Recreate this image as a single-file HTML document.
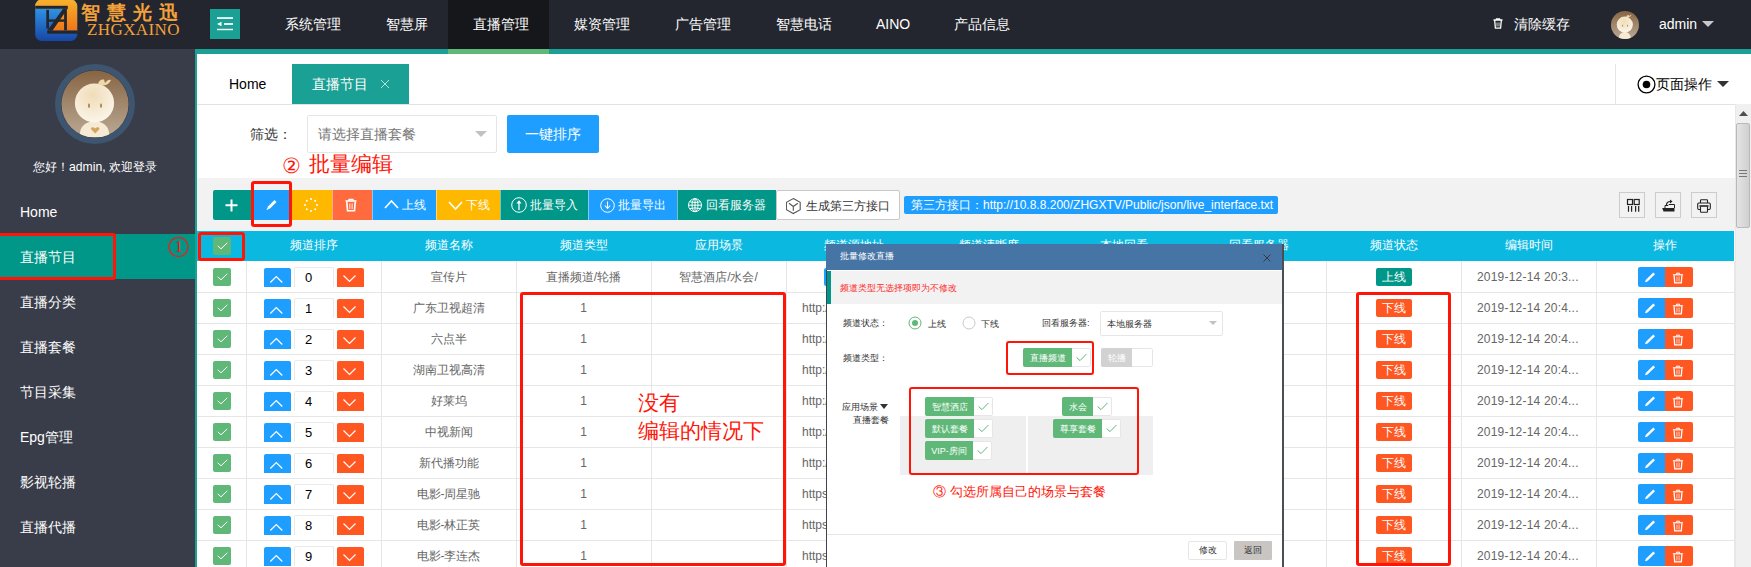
<!DOCTYPE html>
<html><head><meta charset="utf-8">
<style>
*{box-sizing:border-box;margin:0;padding:0}
html,body{width:1751px;height:567px;overflow:hidden;background:#fff;font-family:"Liberation Sans",sans-serif;}
.abs{position:absolute}
.t{position:absolute;white-space:nowrap;line-height:1}
#hdr{position:absolute;left:0;top:0;width:1751px;height:49px;background:#23262E}
#side{position:absolute;left:0;top:49px;width:195px;height:518px;background:#393D49}
.nav{position:absolute;top:0;height:49px;line-height:48px;color:#fff;font-size:14px;white-space:nowrap}
.sm{position:absolute;left:20px;color:#fff;font-size:14px;white-space:nowrap;line-height:1}
.btn{position:absolute;top:190px;height:30px;color:#fff;font-size:12px;white-space:nowrap}
.cb{position:absolute;width:18px;height:18px;background:#5FB878;border-radius:2px}
.cell{position:absolute;font-size:12px;color:#666;white-space:nowrap;line-height:1;text-align:center}
</style></head><body>

<div id="hdr"></div>
<svg class="abs" style="left:35px;top:0px" width="43" height="42" viewBox="0 0 43 42">
<defs><linearGradient id="lg1" gradientUnits="userSpaceOnUse" x1="0" y1="0" x2="0" y2="31"><stop offset="0" stop-color="#f7b02c"/><stop offset="1" stop-color="#ee7418"/></linearGradient>
<linearGradient id="lg2" gradientUnits="userSpaceOnUse" x1="0" y1="9" x2="0" y2="41"><stop offset="0" stop-color="#2e92e4"/><stop offset="1" stop-color="#1746a4"/></linearGradient>
<clipPath id="lgc"><rect x="0.2" y="-0.5" width="42" height="41.5" rx="6.5"/></clipPath></defs>
<g clip-path="url(#lgc)">
<rect x="0" y="-7" width="43" height="49" fill="url(#lg2)"/>
<path d="M0 -7 H43 V30.8 H13 L29 8.7 H0 Z" fill="url(#lg1)"/>
<g fill="#23262E">
<rect x="0" y="5.8" width="32.8" height="3"/>
<path d="M28.2 8.6 H32.8 L17.4 30.8 H12.2 Z"/>
<rect x="12.2" y="30.5" width="31" height="3.2"/>
<rect x="11.3" y="9.9" width="2.7" height="18.7"/>
<rect x="29.1" y="10.3" width="2.8" height="20"/>
<rect x="13.5" y="19.4" width="16" height="2.4"/>
</g></g></svg>
<div class="t" style="left:81px;top:3px;font-family:'Liberation Serif',serif;font-size:19px;color:#f3a13a;letter-spacing:7px;font-weight:bold">智慧光迅</div>
<div class="t" style="left:87px;top:21px;font-family:'Liberation Serif',serif;font-size:17px;color:#f3a13a;letter-spacing:0.4px">ZHGXAINO</div>
<div class="abs" style="left:210px;top:9px;width:30px;height:30px;background:#1AA094"></div>
<svg class="abs" style="left:217px;top:17px" width="17" height="15" viewBox="0 0 17 15"><rect x="0" y="0.2" width="16" height="1.7" fill="#fff"/><rect x="7" y="6.1" width="9" height="1.8" fill="#fff"/><path d="M0 7 L4.5 4.7 V9.3 Z" fill="#fff"/><rect x="0" y="11.8" width="16" height="1.4" fill="#fff"/></svg>
<div class="abs" style="left:448px;top:0;width:101px;height:49px;background:#16171b"></div>
<div class="t" style="left:285px;top:17px;font-size:14px;color:#fff">系统管理</div>
<div class="t" style="left:386px;top:17px;font-size:14px;color:#fff">智慧屏</div>
<div class="t" style="left:473px;top:17px;font-size:14px;color:#fff">直播管理</div>
<div class="t" style="left:574px;top:17px;font-size:14px;color:#fff">媒资管理</div>
<div class="t" style="left:675px;top:17px;font-size:14px;color:#fff">广告管理</div>
<div class="t" style="left:776px;top:17px;font-size:14px;color:#fff">智慧电话</div>
<div class="t" style="left:876px;top:17px;font-size:14px;color:#fff">AINO</div>
<div class="t" style="left:954px;top:17px;font-size:14px;color:#fff">产品信息</div>
<svg class="abs" style="left:1493px;top:18px" width="10" height="11" viewBox="0 0 10 11"><path d="M0.5 2 H9.5 M3.5 2 V0.8 H6.5 V2 M1.7 2.5 L2.4 10.2 H7.6 L8.3 2.5" fill="none" stroke="#fff" stroke-width="1.3"/><path d="M4 4.5V8.5M6 4.5V8.5" stroke="#fff" stroke-width="0.8"/></svg>
<div class="t" style="left:1514px;top:17px;font-size:14px;color:#fff">清除缓存</div>
<svg class="abs" style="left:1611px;top:11px" width="28" height="28" viewBox="6 6 68 68">
<defs><linearGradient id="av1" x1="0" y1="0" x2="0" y2="1"><stop offset="0" stop-color="#876543"/><stop offset="1" stop-color="#bba995"/></linearGradient>
<radialGradient id="hd1" cx="0.45" cy="0.3" r="0.7"><stop offset="0" stop-color="#f0dcb8"/><stop offset="1" stop-color="#fbf5ea"/></radialGradient>
<clipPath id="cc1"><circle cx="40" cy="40" r="34"/></clipPath></defs>
<circle cx="40" cy="40" r="34" fill="url(#av1)"/>
<g clip-path="url(#cc1)"><path d="M24.5 75 Q24.5 58 39.5 57 Q54.5 58 54.5 75 Z" fill="#f6ead5"/></g>
<circle cx="39.5" cy="39" r="19.6" fill="url(#hd1)"/>
<path d="M43 20.5 Q44 15 49 15.5 L50 19 Q53 15 56 16 Q54 21 48 21.5 Z" fill="#efd9a9"/>
<rect x="33" y="39.5" width="2.4" height="4.5" fill="#b78c4c"/><rect x="45" y="39.5" width="2.4" height="4.5" fill="#b78c4c"/>
</svg>
<div class="t" style="left:1659px;top:17px;font-size:14px;color:#fff">admin</div>
<svg class="abs" style="left:1702px;top:21px" width="12" height="7"><path d="M0 0H12L6 6Z" fill="#c8c8cc"/></svg>
<div class="abs" style="left:195px;top:49px;width:1556px;height:5px;background:#1AA094"></div>
<div class="abs" style="left:448px;top:49px;width:101px;height:5px;background:#5FB878"></div>
<div id="side"></div>
<div class="abs" style="left:195px;top:54px;width:2px;height:513px;background:#1AA094"></div>
<svg class="abs" style="left:55px;top:64px" width="80" height="80" viewBox="0 0 80 80">
<defs><linearGradient id="av2" x1="0" y1="0" x2="0" y2="1"><stop offset="0" stop-color="#876543"/><stop offset="1" stop-color="#bba995"/></linearGradient>
<radialGradient id="hd" cx="0.45" cy="0.3" r="0.7"><stop offset="0" stop-color="#f0dcb8"/><stop offset="1" stop-color="#fbf5ea"/></radialGradient>
<clipPath id="cc"><circle cx="40" cy="40" r="33.5"/></clipPath></defs>
<circle cx="40" cy="40" r="36.8" fill="none" stroke="#3e5570" stroke-width="6.4"/>
<circle cx="40" cy="40" r="34" fill="#3a3e48"/>
<circle cx="40" cy="40" r="33.5" fill="url(#av2)"/>
<g clip-path="url(#cc)"><path d="M24.5 73 Q24.5 58 39.5 57 Q54.5 58 54.5 73 Z" fill="#f6ead5"/></g>
<circle cx="39.5" cy="39" r="19.6" fill="url(#hd)"/>
<path d="M43 20.5 Q44 15 49 15.5 L50 19 Q53 15 56 16 Q54 21 48 21.5 Z" fill="#efd9a9"/>
<rect x="33" y="39.5" width="2" height="4.2" rx="1" fill="#b78c4c"/><rect x="45" y="39.5" width="2" height="4.2" rx="1" fill="#b78c4c"/>
<path d="M40.2 69.5 L36.3 65.6 Q35.3 63.3 37.6 63.2 Q39 63.2 40.2 64.6 Q41.4 63.2 42.8 63.2 Q45.1 63.3 44.1 65.6 Z" fill="#d5a55e"/>
</svg>
<div class="t" style="left:33px;top:160.7px;font-size:12.2px;color:#fff">您好！admin, 欢迎登录</div>
<div class="abs" style="left:0;top:234px;width:195px;height:45px;background:#009688"></div>
<div class="sm" style="top:205px">Home</div>
<div class="sm" style="top:250px">直播节目</div>
<div class="sm" style="top:295px">直播分类</div>
<div class="sm" style="top:340px">直播套餐</div>
<div class="sm" style="top:385px">节目采集</div>
<div class="sm" style="top:430px">Epg管理</div>
<div class="sm" style="top:475px">影视轮播</div>
<div class="sm" style="top:520px">直播代播</div>
<div class="abs" style="left:197px;top:104px;width:1538px;height:1px;background:#e2e2e2"></div>
<div class="t" style="left:229px;top:77px;font-size:14px;color:#000">Home</div>
<div class="abs" style="left:292px;top:64px;width:117px;height:40px;background:#1AA094"></div>
<div class="t" style="left:312px;top:77px;font-size:14px;color:#fff">直播节目</div>
<svg class="abs" style="left:380px;top:79px" width="10" height="10"><path d="M1 1L9 9M9 1L1 9" stroke="rgba(255,255,255,0.75)" stroke-width="0.9"/></svg>
<div class="abs" style="left:1615px;top:64px;width:1px;height:40px;background:#e6e6e6"></div>
<svg class="abs" style="left:1637px;top:75px" width="19" height="19"><circle cx="9.5" cy="9.5" r="8.4" fill="none" stroke="#000" stroke-width="1.3"/><circle cx="9.5" cy="9.5" r="3.8" fill="#000"/></svg>
<div class="t" style="left:1656px;top:77px;font-size:14px;color:#000">页面操作</div>
<svg class="abs" style="left:1717px;top:81px" width="12" height="7"><path d="M0 0H12L6 6Z" fill="#333"/></svg>
<div class="t" style="left:250px;top:127px;font-size:14px;color:#333">筛选：</div>
<div class="abs" style="left:307px;top:115px;width:190px;height:38px;border:1px solid #e6e6e6;background:#fff;border-radius:2px"></div>
<div class="t" style="left:318px;top:127px;font-size:14px;color:#757575">请选择直播套餐</div>
<svg class="abs" style="left:475px;top:131px" width="12" height="6"><path d="M0 0H12L6 6Z" fill="#c2c2c2"/></svg>
<div class="abs" style="left:507px;top:115px;width:92px;height:38px;background:#1E9FFF;border-radius:2px"></div>
<div class="t" style="left:525px;top:127px;font-size:14px;color:#fff">一键排序</div>
<div class="abs" style="left:197px;top:178px;width:1538px;height:1px;background:#e6e6e6"></div>
<div class="abs" style="left:197px;top:178px;width:1538px;height:53px;background:#f2f2f2"></div>
<div class="btn" style="left:213px;width:38px;background:#009688;border-radius:2px 0 0 2px"><div class="abs" style="left:0px;top:0"><svg class="abs" style="left:12px;top:9px" width="13" height="13"><path d="M6.5 0.5V12.5M0.5 6.3H12.5" stroke="#fff" stroke-width="2"/></svg></div></div>
<div class="btn" style="left:251px;width:39px;background:#1E9FFF;border-left:1px solid rgba(255,255,255,0.45);"><div class="abs" style="left:-1px;top:0"><svg class="abs" style="left:14px;top:8px" width="13" height="13" viewBox="0 0 13 13"><path d="M2 11.5 L3 8.5 L9.5 2 L11.5 4 L5 10.5 Z" fill="#fff"/><path d="M1.5 12 L2.2 10.2 L3.3 11.3Z" fill="#fff"/></svg></div></div>
<div class="btn" style="left:290px;width:42px;background:#FFB800;border-left:1px solid rgba(255,255,255,0.45);"><div class="abs" style="left:-1px;top:0"><svg class="abs" style="left:13px;top:7px" width="16" height="16" viewBox="0 0 16 16" fill="#fff"><circle cx="8" cy="2" r="1"/><circle cx="12.2" cy="3.8" r="1"/><circle cx="14" cy="8" r="1"/><circle cx="12.2" cy="12.2" r="1"/><circle cx="8" cy="14" r="1"/><circle cx="3.8" cy="12.2" r="1"/><circle cx="2" cy="8" r="1"/><circle cx="3.8" cy="3.8" r="1"/></svg></div></div>
<div class="btn" style="left:332px;width:40px;background:#FF6A3E;border-left:1px solid rgba(255,255,255,0.45);"><div class="abs" style="left:-1px;top:0"><svg class="abs" style="left:12px;top:8px" width="14" height="14" viewBox="0 0 14 14"><path d="M1.5 3 H12.5" stroke="#fff" stroke-width="1.6"/><path d="M5 3 V1.5 H9 V3" fill="none" stroke="#fff" stroke-width="1.3"/><path d="M2.8 4 L3.5 12.8 H10.5 L11.2 4" fill="none" stroke="#fff" stroke-width="1.6"/><path d="M5.5 5.5V11M7 5.5V11M8.5 5.5V11" stroke="#fff" stroke-width="0.6"/></svg></div></div>
<div class="btn" style="left:372px;width:64px;background:#1E9FFF;border-left:1px solid rgba(255,255,255,0.45);"><div class="abs" style="left:-1px;top:0"><svg class="abs" style="left:12px;top:9px" width="15" height="10"><path d="M1 9 L7.5 2 L14 9" fill="none" stroke="#fff" stroke-width="1.6"/></svg><div class="t" style="left:30px;top:9px">上线</div></div></div>
<div class="btn" style="left:436px;width:64px;background:#FFB800;border-left:1px solid rgba(255,255,255,0.45);"><div class="abs" style="left:-1px;top:0"><svg class="abs" style="left:12px;top:11px" width="15" height="10"><path d="M1 1 L7.5 8 L14 1" fill="none" stroke="#fff" stroke-width="1.6"/></svg><div class="t" style="left:30px;top:9px">下线</div></div></div>
<div class="btn" style="left:500px;width:88px;background:#009688;border-left:1px solid rgba(255,255,255,0.45);"><div class="abs" style="left:-1px;top:0"><svg class="abs" style="left:11px;top:7px" width="16" height="16" viewBox="0 0 16 16"><circle cx="8" cy="8" r="7.3" fill="none" stroke="#fff" stroke-width="1"/><path d="M8 13V4.5" stroke="#fff" stroke-width="1.3"/><path d="M5.5 6.5 L8 3.3 L10.5 6.5Z" fill="#fff"/></svg><div class="t" style="left:30px;top:9px">批量导入</div></div></div>
<div class="btn" style="left:588px;width:89px;background:#1E9FFF;border-left:1px solid rgba(255,255,255,0.45);"><div class="abs" style="left:-1px;top:0"><svg class="abs" style="left:12px;top:8px" width="15" height="15" viewBox="0 0 15 15"><circle cx="7.5" cy="7.5" r="6.8" fill="none" stroke="#fff" stroke-width="1"/><path d="M7.5 3.5V10" stroke="#fff" stroke-width="1.1"/><path d="M4.8 7.5 L7.5 10.5 L10.2 7.5" fill="none" stroke="#fff" stroke-width="1.1"/></svg><div class="t" style="left:30px;top:9px">批量导出</div></div></div>
<div class="btn" style="left:677px;width:99px;background:#009688;border-left:1px solid rgba(255,255,255,0.45);"><div class="abs" style="left:-1px;top:0"><svg class="abs" style="left:11px;top:8px" width="15" height="15" viewBox="0 0 15 15" fill="none" stroke="#fff" stroke-width="1"><circle cx="7" cy="7.2" r="6.5"/><ellipse cx="7" cy="7.2" rx="3" ry="6.5"/><path d="M7 0.7V13.7M0.5 7.2H13.5M1.5 3.8Q7 5.2 12.5 3.8M1.5 10.6Q7 9.2 12.5 10.6"/></svg><div class="t" style="left:29px;top:9px">回看服务器</div></div></div>
<div class="btn" style="left:776px;width:124px;background:#fff;border:1px solid #C9C9C9;border-radius:2px;color:#333"><div class="abs" style="left:0px;top:0"><svg class="abs" style="left:9px;top:6px" width="16" height="18" viewBox="0 0 16 18" fill="none" stroke="#555" stroke-width="1.1"><path d="M7.3 1.6 L14.2 5.3 V12.7 L7.3 16.5 L0.4 12.7 V5.3 Z"/><path d="M3 6.2 L7.3 9.5 L11.8 6.2 M7.3 9.5 V13.8"/></svg><div class="t" style="left:29px;top:9px;color:#333">生成第三方接口</div></div></div>
<div class="abs" style="left:904px;top:196px;width:374px;height:18px;background:#1E9FFF;border-radius:2px"></div>
<div class="t" style="left:911px;top:199px;font-size:12px;color:#fff">第三方接口：http://10.8.8.200/ZHGXTV/Public/json/live_interface.txt</div>
<div class="abs" style="left:1619px;top:192px;width:26px;height:26px;border:1px solid #ccc"></div>
<div class="abs" style="left:1655px;top:192px;width:26px;height:26px;border:1px solid #ccc"></div>
<div class="abs" style="left:1691px;top:192px;width:26px;height:26px;border:1px solid #ccc"></div>
<svg class="abs" style="left:1626px;top:198px" width="15" height="15" viewBox="0 0 15 15"><rect x="1.5" y="1.5" width="5" height="5" fill="none" stroke="#222" stroke-width="1.2"/><rect x="8.2" y="1.5" width="5" height="5" fill="none" stroke="#222" stroke-width="1.2"/><path d="M2.5 8V13.8M5.6 8V13.8M9.6 8V13.8M12.7 8V13.8" stroke="#222" stroke-width="1.2"/></svg>
<svg class="abs" style="left:1662px;top:199px" width="13" height="13" viewBox="0 0 13 13"><path d="M0.2 9 H12.5 V12.5 H1.5 Z" fill="#222"/><path d="M3 9 V6.5 H6 L7 5.5 H12.5 V9" fill="none" stroke="#222" stroke-width="1"/><path d="M4.5 6 Q4.5 2.5 8.5 2.5" fill="none" stroke="#222" stroke-width="1.2"/><path d="M8 0.5 L10.5 2.5 L8 4.5Z" fill="#222"/></svg>
<svg class="abs" style="left:1697px;top:199px" width="14" height="14" viewBox="0 0 14 14" fill="none" stroke="#222" stroke-width="1.1"><path d="M3.5 4 V1.5 Q3.5 0.8 4.2 0.8 H9.8 Q10.5 0.8 10.5 1.5 V4"/><path d="M3 10.5 H1.8 Q0.7 10.5 0.7 9.3 V5.2 Q0.7 4 1.8 4 H12.2 Q13.3 4 13.3 5.2 V9.3 Q13.3 10.5 12.2 10.5 H11"/><path d="M3.5 7.5 V12.5 Q3.5 13.2 4.2 13.2 H9.8 Q10.5 13.2 10.5 12.5 V7.5"/><path d="M2.5 7 H11.5" stroke-width="1.6"/></svg>
<div class="abs" style="left:197px;top:231px;width:1537px;height:30px;background:#0bb8e0"></div>
<div class="t" style="left:246px;width:135px;top:239px;font-size:12px;color:#fff;text-align:center">频道排序</div>
<div class="t" style="left:381px;width:135px;top:239px;font-size:12px;color:#fff;text-align:center">频道名称</div>
<div class="t" style="left:516px;width:135px;top:239px;font-size:12px;color:#fff;text-align:center">频道类型</div>
<div class="t" style="left:651px;width:135px;top:239px;font-size:12px;color:#fff;text-align:center">应用场景</div>
<div class="t" style="left:786px;width:135px;top:239px;font-size:12px;color:#fff;text-align:center">频道源地址</div>
<div class="t" style="left:921px;width:135px;top:239px;font-size:12px;color:#fff;text-align:center">频道清晰度</div>
<div class="t" style="left:1056px;width:135px;top:239px;font-size:12px;color:#fff;text-align:center">本地回看</div>
<div class="t" style="left:1191px;width:135px;top:239px;font-size:12px;color:#fff;text-align:center">回看服务器</div>
<div class="t" style="left:1326px;width:135px;top:239px;font-size:12px;color:#fff;text-align:center">频道状态</div>
<div class="t" style="left:1461px;width:135px;top:239px;font-size:12px;color:#fff;text-align:center">编辑时间</div>
<div class="t" style="left:1596px;width:138px;top:239px;font-size:12px;color:#fff;text-align:center">操作</div>
<div class="cb" style="left:213px;top:237px"><svg class="abs" style="left:4px;top:5px" width="11" height="8"><path d="M0.7 3.8 L4 6.8 L10.3 0.8" fill="none" stroke="#fff" stroke-width="1"/></svg></div>
<div class="abs" style="left:197px;top:261px;width:1537px;height:306px;background:#fff"></div>
<div class="abs" style="left:246px;top:261px;width:1px;height:306px;background:#e6e6e6"></div>
<div class="abs" style="left:381px;top:261px;width:1px;height:306px;background:#e6e6e6"></div>
<div class="abs" style="left:516px;top:261px;width:1px;height:306px;background:#e6e6e6"></div>
<div class="abs" style="left:651px;top:261px;width:1px;height:306px;background:#e6e6e6"></div>
<div class="abs" style="left:786px;top:261px;width:1px;height:306px;background:#e6e6e6"></div>
<div class="abs" style="left:921px;top:261px;width:1px;height:306px;background:#e6e6e6"></div>
<div class="abs" style="left:1056px;top:261px;width:1px;height:306px;background:#e6e6e6"></div>
<div class="abs" style="left:1191px;top:261px;width:1px;height:306px;background:#e6e6e6"></div>
<div class="abs" style="left:1326px;top:261px;width:1px;height:306px;background:#e6e6e6"></div>
<div class="abs" style="left:1461px;top:261px;width:1px;height:306px;background:#e6e6e6"></div>
<div class="abs" style="left:1596px;top:261px;width:1px;height:306px;background:#e6e6e6"></div>
<div class="abs" style="left:1734px;top:261px;width:1px;height:306px;background:#e6e6e6"></div>
<div class="abs" style="left:197px;top:292px;width:1537px;height:1px;background:#e6e6e6"></div>
<div class="cb" style="left:213px;top:268px"><svg class="abs" style="left:4px;top:5px" width="11" height="8"><path d="M0.7 3.8 L4 6.8 L10.3 0.8" fill="none" stroke="#fff" stroke-width="1"/></svg></div>
<div class="abs" style="left:264px;top:268px;width:27px;height:19px;background:#1E9FFF;border-radius:2px 2px 0 0"><svg class="abs" style="left:5px;top:7px" width="15" height="9"><path d="M1.3 7.5 L7.3 1.5 L13.3 7.5" fill="none" stroke="#fff" stroke-width="1.2"/></svg></div>
<div class="abs" style="left:294px;top:267px;width:40px;height:20px;background:#fff;border:1px solid #eaeaea;border-bottom:none;border-radius:2px 2px 0 0"></div>
<div class="t" style="left:305px;top:271px;font-size:13px;color:#000">0</div>
<div class="abs" style="left:337px;top:268px;width:27px;height:19px;background:#FF5722;border-radius:2px 2px 0 0"><svg class="abs" style="left:5px;top:6px" width="15" height="9"><path d="M1.5 1.5 L7.5 7.5 L13.5 1.5" fill="none" stroke="#fff" stroke-width="1.2"/></svg></div>
<div class="cell" style="left:381px;width:135px;top:271px">宣传片</div>
<div class="cell" style="left:516px;width:135px;top:271px">直播频道/轮播</div>
<div class="cell" style="left:651px;width:135px;top:271px">智慧酒店/水会/</div>
<div class="abs" style="left:824px;top:268px;width:20px;height:18px;background:#1E9FFF;border-radius:2px"></div>
<div class="abs" style="left:1376px;top:268px;width:36px;height:18px;background:#009688;border-radius:2px"></div><div class="t" style="left:1382px;top:271px;font-size:12px;color:#fff">上线</div>
<div class="t" style="left:1477px;top:271px;font-size:12px;color:#666;letter-spacing:0.2px">2019-12-14 20:3...</div>
<div class="abs" style="left:1638px;top:267px;width:27px;height:20px;background:#1E9FFF;border-radius:2px 0 0 2px"><svg class="abs" style="left:6px;top:5px" width="12" height="11" viewBox="0 0 12 11"><path d="M1 10.2 L1.9 7.8 L9.3 0.6 L11 2.3 L3.5 9.6Z" fill="#fff"/></svg></div>
<div class="abs" style="left:1665px;top:267px;width:28px;height:20px;background:#FF5722;border-radius:0 2px 2px 0"><svg class="abs" style="left:7px;top:5px" width="12" height="12" viewBox="0 0 12 12"><path d="M4.4 2.3 V1.2 H7.6 V2.3" fill="none" stroke="#fff" stroke-width="1"/><path d="M0.9 2.8 H11.1" stroke="#fff" stroke-width="1.2"/><path d="M2.1 3.4 L2.7 10.8 H9.3 L9.9 3.4" fill="none" stroke="#fff" stroke-width="1.3"/><path d="M4.7 4.6V9.6M6 4.6V9.6M7.3 4.6V9.6" stroke="#fff" stroke-width="0.5"/></svg></div>
<div class="abs" style="left:197px;top:323px;width:1537px;height:1px;background:#e6e6e6"></div>
<div class="cb" style="left:213px;top:299px"><svg class="abs" style="left:4px;top:5px" width="11" height="8"><path d="M0.7 3.8 L4 6.8 L10.3 0.8" fill="none" stroke="#fff" stroke-width="1"/></svg></div>
<div class="abs" style="left:264px;top:299px;width:27px;height:19px;background:#1E9FFF;border-radius:2px 2px 0 0"><svg class="abs" style="left:5px;top:7px" width="15" height="9"><path d="M1.3 7.5 L7.3 1.5 L13.3 7.5" fill="none" stroke="#fff" stroke-width="1.2"/></svg></div>
<div class="abs" style="left:294px;top:298px;width:40px;height:20px;background:#fff;border:1px solid #eaeaea;border-bottom:none;border-radius:2px 2px 0 0"></div>
<div class="t" style="left:305px;top:302px;font-size:13px;color:#000">1</div>
<div class="abs" style="left:337px;top:299px;width:27px;height:19px;background:#FF5722;border-radius:2px 2px 0 0"><svg class="abs" style="left:5px;top:6px" width="15" height="9"><path d="M1.5 1.5 L7.5 7.5 L13.5 1.5" fill="none" stroke="#fff" stroke-width="1.2"/></svg></div>
<div class="cell" style="left:381px;width:135px;top:302px">广东卫视超清</div>
<div class="cell" style="left:516px;width:135px;top:302px">1</div>
<div class="t" style="left:802px;top:302px;font-size:12px;color:#666">http://10.8.8.200</div>
<div class="abs" style="left:1376px;top:299px;width:36px;height:18px;background:#FF5722;border-radius:2px"></div><div class="t" style="left:1382px;top:302px;font-size:12px;color:#fff">下线</div>
<div class="t" style="left:1477px;top:302px;font-size:12px;color:#666;letter-spacing:0.2px">2019-12-14 20:4...</div>
<div class="abs" style="left:1638px;top:298px;width:27px;height:20px;background:#1E9FFF;border-radius:2px 0 0 2px"><svg class="abs" style="left:6px;top:5px" width="12" height="11" viewBox="0 0 12 11"><path d="M1 10.2 L1.9 7.8 L9.3 0.6 L11 2.3 L3.5 9.6Z" fill="#fff"/></svg></div>
<div class="abs" style="left:1665px;top:298px;width:28px;height:20px;background:#FF5722;border-radius:0 2px 2px 0"><svg class="abs" style="left:7px;top:5px" width="12" height="12" viewBox="0 0 12 12"><path d="M4.4 2.3 V1.2 H7.6 V2.3" fill="none" stroke="#fff" stroke-width="1"/><path d="M0.9 2.8 H11.1" stroke="#fff" stroke-width="1.2"/><path d="M2.1 3.4 L2.7 10.8 H9.3 L9.9 3.4" fill="none" stroke="#fff" stroke-width="1.3"/><path d="M4.7 4.6V9.6M6 4.6V9.6M7.3 4.6V9.6" stroke="#fff" stroke-width="0.5"/></svg></div>
<div class="abs" style="left:197px;top:354px;width:1537px;height:1px;background:#e6e6e6"></div>
<div class="cb" style="left:213px;top:330px"><svg class="abs" style="left:4px;top:5px" width="11" height="8"><path d="M0.7 3.8 L4 6.8 L10.3 0.8" fill="none" stroke="#fff" stroke-width="1"/></svg></div>
<div class="abs" style="left:264px;top:330px;width:27px;height:19px;background:#1E9FFF;border-radius:2px 2px 0 0"><svg class="abs" style="left:5px;top:7px" width="15" height="9"><path d="M1.3 7.5 L7.3 1.5 L13.3 7.5" fill="none" stroke="#fff" stroke-width="1.2"/></svg></div>
<div class="abs" style="left:294px;top:329px;width:40px;height:20px;background:#fff;border:1px solid #eaeaea;border-bottom:none;border-radius:2px 2px 0 0"></div>
<div class="t" style="left:305px;top:333px;font-size:13px;color:#000">2</div>
<div class="abs" style="left:337px;top:330px;width:27px;height:19px;background:#FF5722;border-radius:2px 2px 0 0"><svg class="abs" style="left:5px;top:6px" width="15" height="9"><path d="M1.5 1.5 L7.5 7.5 L13.5 1.5" fill="none" stroke="#fff" stroke-width="1.2"/></svg></div>
<div class="cell" style="left:381px;width:135px;top:333px">六点半</div>
<div class="cell" style="left:516px;width:135px;top:333px">1</div>
<div class="t" style="left:802px;top:333px;font-size:12px;color:#666">http://10.8.8.200</div>
<div class="abs" style="left:1376px;top:330px;width:36px;height:18px;background:#FF5722;border-radius:2px"></div><div class="t" style="left:1382px;top:333px;font-size:12px;color:#fff">下线</div>
<div class="t" style="left:1477px;top:333px;font-size:12px;color:#666;letter-spacing:0.2px">2019-12-14 20:4...</div>
<div class="abs" style="left:1638px;top:329px;width:27px;height:20px;background:#1E9FFF;border-radius:2px 0 0 2px"><svg class="abs" style="left:6px;top:5px" width="12" height="11" viewBox="0 0 12 11"><path d="M1 10.2 L1.9 7.8 L9.3 0.6 L11 2.3 L3.5 9.6Z" fill="#fff"/></svg></div>
<div class="abs" style="left:1665px;top:329px;width:28px;height:20px;background:#FF5722;border-radius:0 2px 2px 0"><svg class="abs" style="left:7px;top:5px" width="12" height="12" viewBox="0 0 12 12"><path d="M4.4 2.3 V1.2 H7.6 V2.3" fill="none" stroke="#fff" stroke-width="1"/><path d="M0.9 2.8 H11.1" stroke="#fff" stroke-width="1.2"/><path d="M2.1 3.4 L2.7 10.8 H9.3 L9.9 3.4" fill="none" stroke="#fff" stroke-width="1.3"/><path d="M4.7 4.6V9.6M6 4.6V9.6M7.3 4.6V9.6" stroke="#fff" stroke-width="0.5"/></svg></div>
<div class="abs" style="left:197px;top:385px;width:1537px;height:1px;background:#e6e6e6"></div>
<div class="cb" style="left:213px;top:361px"><svg class="abs" style="left:4px;top:5px" width="11" height="8"><path d="M0.7 3.8 L4 6.8 L10.3 0.8" fill="none" stroke="#fff" stroke-width="1"/></svg></div>
<div class="abs" style="left:264px;top:361px;width:27px;height:19px;background:#1E9FFF;border-radius:2px 2px 0 0"><svg class="abs" style="left:5px;top:7px" width="15" height="9"><path d="M1.3 7.5 L7.3 1.5 L13.3 7.5" fill="none" stroke="#fff" stroke-width="1.2"/></svg></div>
<div class="abs" style="left:294px;top:360px;width:40px;height:20px;background:#fff;border:1px solid #eaeaea;border-bottom:none;border-radius:2px 2px 0 0"></div>
<div class="t" style="left:305px;top:364px;font-size:13px;color:#000">3</div>
<div class="abs" style="left:337px;top:361px;width:27px;height:19px;background:#FF5722;border-radius:2px 2px 0 0"><svg class="abs" style="left:5px;top:6px" width="15" height="9"><path d="M1.5 1.5 L7.5 7.5 L13.5 1.5" fill="none" stroke="#fff" stroke-width="1.2"/></svg></div>
<div class="cell" style="left:381px;width:135px;top:364px">湖南卫视高清</div>
<div class="cell" style="left:516px;width:135px;top:364px">1</div>
<div class="t" style="left:802px;top:364px;font-size:12px;color:#666">http://10.8.8.200</div>
<div class="abs" style="left:1376px;top:361px;width:36px;height:18px;background:#FF5722;border-radius:2px"></div><div class="t" style="left:1382px;top:364px;font-size:12px;color:#fff">下线</div>
<div class="t" style="left:1477px;top:364px;font-size:12px;color:#666;letter-spacing:0.2px">2019-12-14 20:4...</div>
<div class="abs" style="left:1638px;top:360px;width:27px;height:20px;background:#1E9FFF;border-radius:2px 0 0 2px"><svg class="abs" style="left:6px;top:5px" width="12" height="11" viewBox="0 0 12 11"><path d="M1 10.2 L1.9 7.8 L9.3 0.6 L11 2.3 L3.5 9.6Z" fill="#fff"/></svg></div>
<div class="abs" style="left:1665px;top:360px;width:28px;height:20px;background:#FF5722;border-radius:0 2px 2px 0"><svg class="abs" style="left:7px;top:5px" width="12" height="12" viewBox="0 0 12 12"><path d="M4.4 2.3 V1.2 H7.6 V2.3" fill="none" stroke="#fff" stroke-width="1"/><path d="M0.9 2.8 H11.1" stroke="#fff" stroke-width="1.2"/><path d="M2.1 3.4 L2.7 10.8 H9.3 L9.9 3.4" fill="none" stroke="#fff" stroke-width="1.3"/><path d="M4.7 4.6V9.6M6 4.6V9.6M7.3 4.6V9.6" stroke="#fff" stroke-width="0.5"/></svg></div>
<div class="abs" style="left:197px;top:416px;width:1537px;height:1px;background:#e6e6e6"></div>
<div class="cb" style="left:213px;top:392px"><svg class="abs" style="left:4px;top:5px" width="11" height="8"><path d="M0.7 3.8 L4 6.8 L10.3 0.8" fill="none" stroke="#fff" stroke-width="1"/></svg></div>
<div class="abs" style="left:264px;top:392px;width:27px;height:19px;background:#1E9FFF;border-radius:2px 2px 0 0"><svg class="abs" style="left:5px;top:7px" width="15" height="9"><path d="M1.3 7.5 L7.3 1.5 L13.3 7.5" fill="none" stroke="#fff" stroke-width="1.2"/></svg></div>
<div class="abs" style="left:294px;top:391px;width:40px;height:20px;background:#fff;border:1px solid #eaeaea;border-bottom:none;border-radius:2px 2px 0 0"></div>
<div class="t" style="left:305px;top:395px;font-size:13px;color:#000">4</div>
<div class="abs" style="left:337px;top:392px;width:27px;height:19px;background:#FF5722;border-radius:2px 2px 0 0"><svg class="abs" style="left:5px;top:6px" width="15" height="9"><path d="M1.5 1.5 L7.5 7.5 L13.5 1.5" fill="none" stroke="#fff" stroke-width="1.2"/></svg></div>
<div class="cell" style="left:381px;width:135px;top:395px">好莱坞</div>
<div class="cell" style="left:516px;width:135px;top:395px">1</div>
<div class="t" style="left:802px;top:395px;font-size:12px;color:#666">http://10.8.8.200</div>
<div class="abs" style="left:1376px;top:392px;width:36px;height:18px;background:#FF5722;border-radius:2px"></div><div class="t" style="left:1382px;top:395px;font-size:12px;color:#fff">下线</div>
<div class="t" style="left:1477px;top:395px;font-size:12px;color:#666;letter-spacing:0.2px">2019-12-14 20:4...</div>
<div class="abs" style="left:1638px;top:391px;width:27px;height:20px;background:#1E9FFF;border-radius:2px 0 0 2px"><svg class="abs" style="left:6px;top:5px" width="12" height="11" viewBox="0 0 12 11"><path d="M1 10.2 L1.9 7.8 L9.3 0.6 L11 2.3 L3.5 9.6Z" fill="#fff"/></svg></div>
<div class="abs" style="left:1665px;top:391px;width:28px;height:20px;background:#FF5722;border-radius:0 2px 2px 0"><svg class="abs" style="left:7px;top:5px" width="12" height="12" viewBox="0 0 12 12"><path d="M4.4 2.3 V1.2 H7.6 V2.3" fill="none" stroke="#fff" stroke-width="1"/><path d="M0.9 2.8 H11.1" stroke="#fff" stroke-width="1.2"/><path d="M2.1 3.4 L2.7 10.8 H9.3 L9.9 3.4" fill="none" stroke="#fff" stroke-width="1.3"/><path d="M4.7 4.6V9.6M6 4.6V9.6M7.3 4.6V9.6" stroke="#fff" stroke-width="0.5"/></svg></div>
<div class="abs" style="left:197px;top:447px;width:1537px;height:1px;background:#e6e6e6"></div>
<div class="cb" style="left:213px;top:423px"><svg class="abs" style="left:4px;top:5px" width="11" height="8"><path d="M0.7 3.8 L4 6.8 L10.3 0.8" fill="none" stroke="#fff" stroke-width="1"/></svg></div>
<div class="abs" style="left:264px;top:423px;width:27px;height:19px;background:#1E9FFF;border-radius:2px 2px 0 0"><svg class="abs" style="left:5px;top:7px" width="15" height="9"><path d="M1.3 7.5 L7.3 1.5 L13.3 7.5" fill="none" stroke="#fff" stroke-width="1.2"/></svg></div>
<div class="abs" style="left:294px;top:422px;width:40px;height:20px;background:#fff;border:1px solid #eaeaea;border-bottom:none;border-radius:2px 2px 0 0"></div>
<div class="t" style="left:305px;top:426px;font-size:13px;color:#000">5</div>
<div class="abs" style="left:337px;top:423px;width:27px;height:19px;background:#FF5722;border-radius:2px 2px 0 0"><svg class="abs" style="left:5px;top:6px" width="15" height="9"><path d="M1.5 1.5 L7.5 7.5 L13.5 1.5" fill="none" stroke="#fff" stroke-width="1.2"/></svg></div>
<div class="cell" style="left:381px;width:135px;top:426px">中视新闻</div>
<div class="cell" style="left:516px;width:135px;top:426px">1</div>
<div class="t" style="left:802px;top:426px;font-size:12px;color:#666">http://10.8.8.200</div>
<div class="abs" style="left:1376px;top:423px;width:36px;height:18px;background:#FF5722;border-radius:2px"></div><div class="t" style="left:1382px;top:426px;font-size:12px;color:#fff">下线</div>
<div class="t" style="left:1477px;top:426px;font-size:12px;color:#666;letter-spacing:0.2px">2019-12-14 20:4...</div>
<div class="abs" style="left:1638px;top:422px;width:27px;height:20px;background:#1E9FFF;border-radius:2px 0 0 2px"><svg class="abs" style="left:6px;top:5px" width="12" height="11" viewBox="0 0 12 11"><path d="M1 10.2 L1.9 7.8 L9.3 0.6 L11 2.3 L3.5 9.6Z" fill="#fff"/></svg></div>
<div class="abs" style="left:1665px;top:422px;width:28px;height:20px;background:#FF5722;border-radius:0 2px 2px 0"><svg class="abs" style="left:7px;top:5px" width="12" height="12" viewBox="0 0 12 12"><path d="M4.4 2.3 V1.2 H7.6 V2.3" fill="none" stroke="#fff" stroke-width="1"/><path d="M0.9 2.8 H11.1" stroke="#fff" stroke-width="1.2"/><path d="M2.1 3.4 L2.7 10.8 H9.3 L9.9 3.4" fill="none" stroke="#fff" stroke-width="1.3"/><path d="M4.7 4.6V9.6M6 4.6V9.6M7.3 4.6V9.6" stroke="#fff" stroke-width="0.5"/></svg></div>
<div class="abs" style="left:197px;top:478px;width:1537px;height:1px;background:#e6e6e6"></div>
<div class="cb" style="left:213px;top:454px"><svg class="abs" style="left:4px;top:5px" width="11" height="8"><path d="M0.7 3.8 L4 6.8 L10.3 0.8" fill="none" stroke="#fff" stroke-width="1"/></svg></div>
<div class="abs" style="left:264px;top:454px;width:27px;height:19px;background:#1E9FFF;border-radius:2px 2px 0 0"><svg class="abs" style="left:5px;top:7px" width="15" height="9"><path d="M1.3 7.5 L7.3 1.5 L13.3 7.5" fill="none" stroke="#fff" stroke-width="1.2"/></svg></div>
<div class="abs" style="left:294px;top:453px;width:40px;height:20px;background:#fff;border:1px solid #eaeaea;border-bottom:none;border-radius:2px 2px 0 0"></div>
<div class="t" style="left:305px;top:457px;font-size:13px;color:#000">6</div>
<div class="abs" style="left:337px;top:454px;width:27px;height:19px;background:#FF5722;border-radius:2px 2px 0 0"><svg class="abs" style="left:5px;top:6px" width="15" height="9"><path d="M1.5 1.5 L7.5 7.5 L13.5 1.5" fill="none" stroke="#fff" stroke-width="1.2"/></svg></div>
<div class="cell" style="left:381px;width:135px;top:457px">新代播功能</div>
<div class="cell" style="left:516px;width:135px;top:457px">1</div>
<div class="t" style="left:802px;top:457px;font-size:12px;color:#666">http://10.8.8.200</div>
<div class="abs" style="left:1376px;top:454px;width:36px;height:18px;background:#FF5722;border-radius:2px"></div><div class="t" style="left:1382px;top:457px;font-size:12px;color:#fff">下线</div>
<div class="t" style="left:1477px;top:457px;font-size:12px;color:#666;letter-spacing:0.2px">2019-12-14 20:4...</div>
<div class="abs" style="left:1638px;top:453px;width:27px;height:20px;background:#1E9FFF;border-radius:2px 0 0 2px"><svg class="abs" style="left:6px;top:5px" width="12" height="11" viewBox="0 0 12 11"><path d="M1 10.2 L1.9 7.8 L9.3 0.6 L11 2.3 L3.5 9.6Z" fill="#fff"/></svg></div>
<div class="abs" style="left:1665px;top:453px;width:28px;height:20px;background:#FF5722;border-radius:0 2px 2px 0"><svg class="abs" style="left:7px;top:5px" width="12" height="12" viewBox="0 0 12 12"><path d="M4.4 2.3 V1.2 H7.6 V2.3" fill="none" stroke="#fff" stroke-width="1"/><path d="M0.9 2.8 H11.1" stroke="#fff" stroke-width="1.2"/><path d="M2.1 3.4 L2.7 10.8 H9.3 L9.9 3.4" fill="none" stroke="#fff" stroke-width="1.3"/><path d="M4.7 4.6V9.6M6 4.6V9.6M7.3 4.6V9.6" stroke="#fff" stroke-width="0.5"/></svg></div>
<div class="abs" style="left:197px;top:509px;width:1537px;height:1px;background:#e6e6e6"></div>
<div class="cb" style="left:213px;top:485px"><svg class="abs" style="left:4px;top:5px" width="11" height="8"><path d="M0.7 3.8 L4 6.8 L10.3 0.8" fill="none" stroke="#fff" stroke-width="1"/></svg></div>
<div class="abs" style="left:264px;top:485px;width:27px;height:19px;background:#1E9FFF;border-radius:2px 2px 0 0"><svg class="abs" style="left:5px;top:7px" width="15" height="9"><path d="M1.3 7.5 L7.3 1.5 L13.3 7.5" fill="none" stroke="#fff" stroke-width="1.2"/></svg></div>
<div class="abs" style="left:294px;top:484px;width:40px;height:20px;background:#fff;border:1px solid #eaeaea;border-bottom:none;border-radius:2px 2px 0 0"></div>
<div class="t" style="left:305px;top:488px;font-size:13px;color:#000">7</div>
<div class="abs" style="left:337px;top:485px;width:27px;height:19px;background:#FF5722;border-radius:2px 2px 0 0"><svg class="abs" style="left:5px;top:6px" width="15" height="9"><path d="M1.5 1.5 L7.5 7.5 L13.5 1.5" fill="none" stroke="#fff" stroke-width="1.2"/></svg></div>
<div class="cell" style="left:381px;width:135px;top:488px">电影-周星驰</div>
<div class="cell" style="left:516px;width:135px;top:488px">1</div>
<div class="t" style="left:802px;top:488px;font-size:12px;color:#666">https://10.8.8.200</div>
<div class="abs" style="left:1376px;top:485px;width:36px;height:18px;background:#FF5722;border-radius:2px"></div><div class="t" style="left:1382px;top:488px;font-size:12px;color:#fff">下线</div>
<div class="t" style="left:1477px;top:488px;font-size:12px;color:#666;letter-spacing:0.2px">2019-12-14 20:4...</div>
<div class="abs" style="left:1638px;top:484px;width:27px;height:20px;background:#1E9FFF;border-radius:2px 0 0 2px"><svg class="abs" style="left:6px;top:5px" width="12" height="11" viewBox="0 0 12 11"><path d="M1 10.2 L1.9 7.8 L9.3 0.6 L11 2.3 L3.5 9.6Z" fill="#fff"/></svg></div>
<div class="abs" style="left:1665px;top:484px;width:28px;height:20px;background:#FF5722;border-radius:0 2px 2px 0"><svg class="abs" style="left:7px;top:5px" width="12" height="12" viewBox="0 0 12 12"><path d="M4.4 2.3 V1.2 H7.6 V2.3" fill="none" stroke="#fff" stroke-width="1"/><path d="M0.9 2.8 H11.1" stroke="#fff" stroke-width="1.2"/><path d="M2.1 3.4 L2.7 10.8 H9.3 L9.9 3.4" fill="none" stroke="#fff" stroke-width="1.3"/><path d="M4.7 4.6V9.6M6 4.6V9.6M7.3 4.6V9.6" stroke="#fff" stroke-width="0.5"/></svg></div>
<div class="abs" style="left:197px;top:540px;width:1537px;height:1px;background:#e6e6e6"></div>
<div class="cb" style="left:213px;top:516px"><svg class="abs" style="left:4px;top:5px" width="11" height="8"><path d="M0.7 3.8 L4 6.8 L10.3 0.8" fill="none" stroke="#fff" stroke-width="1"/></svg></div>
<div class="abs" style="left:264px;top:516px;width:27px;height:19px;background:#1E9FFF;border-radius:2px 2px 0 0"><svg class="abs" style="left:5px;top:7px" width="15" height="9"><path d="M1.3 7.5 L7.3 1.5 L13.3 7.5" fill="none" stroke="#fff" stroke-width="1.2"/></svg></div>
<div class="abs" style="left:294px;top:515px;width:40px;height:20px;background:#fff;border:1px solid #eaeaea;border-bottom:none;border-radius:2px 2px 0 0"></div>
<div class="t" style="left:305px;top:519px;font-size:13px;color:#000">8</div>
<div class="abs" style="left:337px;top:516px;width:27px;height:19px;background:#FF5722;border-radius:2px 2px 0 0"><svg class="abs" style="left:5px;top:6px" width="15" height="9"><path d="M1.5 1.5 L7.5 7.5 L13.5 1.5" fill="none" stroke="#fff" stroke-width="1.2"/></svg></div>
<div class="cell" style="left:381px;width:135px;top:519px">电影-林正英</div>
<div class="cell" style="left:516px;width:135px;top:519px">1</div>
<div class="t" style="left:802px;top:519px;font-size:12px;color:#666">https://10.8.8.200</div>
<div class="abs" style="left:1376px;top:516px;width:36px;height:18px;background:#FF5722;border-radius:2px"></div><div class="t" style="left:1382px;top:519px;font-size:12px;color:#fff">下线</div>
<div class="t" style="left:1477px;top:519px;font-size:12px;color:#666;letter-spacing:0.2px">2019-12-14 20:4...</div>
<div class="abs" style="left:1638px;top:515px;width:27px;height:20px;background:#1E9FFF;border-radius:2px 0 0 2px"><svg class="abs" style="left:6px;top:5px" width="12" height="11" viewBox="0 0 12 11"><path d="M1 10.2 L1.9 7.8 L9.3 0.6 L11 2.3 L3.5 9.6Z" fill="#fff"/></svg></div>
<div class="abs" style="left:1665px;top:515px;width:28px;height:20px;background:#FF5722;border-radius:0 2px 2px 0"><svg class="abs" style="left:7px;top:5px" width="12" height="12" viewBox="0 0 12 12"><path d="M4.4 2.3 V1.2 H7.6 V2.3" fill="none" stroke="#fff" stroke-width="1"/><path d="M0.9 2.8 H11.1" stroke="#fff" stroke-width="1.2"/><path d="M2.1 3.4 L2.7 10.8 H9.3 L9.9 3.4" fill="none" stroke="#fff" stroke-width="1.3"/><path d="M4.7 4.6V9.6M6 4.6V9.6M7.3 4.6V9.6" stroke="#fff" stroke-width="0.5"/></svg></div>
<div class="abs" style="left:197px;top:571px;width:1537px;height:1px;background:#e6e6e6"></div>
<div class="cb" style="left:213px;top:547px"><svg class="abs" style="left:4px;top:5px" width="11" height="8"><path d="M0.7 3.8 L4 6.8 L10.3 0.8" fill="none" stroke="#fff" stroke-width="1"/></svg></div>
<div class="abs" style="left:264px;top:547px;width:27px;height:19px;background:#1E9FFF;border-radius:2px 2px 0 0"><svg class="abs" style="left:5px;top:7px" width="15" height="9"><path d="M1.3 7.5 L7.3 1.5 L13.3 7.5" fill="none" stroke="#fff" stroke-width="1.2"/></svg></div>
<div class="abs" style="left:294px;top:546px;width:40px;height:20px;background:#fff;border:1px solid #eaeaea;border-bottom:none;border-radius:2px 2px 0 0"></div>
<div class="t" style="left:305px;top:550px;font-size:13px;color:#000">9</div>
<div class="abs" style="left:337px;top:547px;width:27px;height:19px;background:#FF5722;border-radius:2px 2px 0 0"><svg class="abs" style="left:5px;top:6px" width="15" height="9"><path d="M1.5 1.5 L7.5 7.5 L13.5 1.5" fill="none" stroke="#fff" stroke-width="1.2"/></svg></div>
<div class="cell" style="left:381px;width:135px;top:550px">电影-李连杰</div>
<div class="cell" style="left:516px;width:135px;top:550px">1</div>
<div class="t" style="left:802px;top:550px;font-size:12px;color:#666">https://10.8.8.200</div>
<div class="abs" style="left:1376px;top:547px;width:36px;height:18px;background:#FF5722;border-radius:2px"></div><div class="t" style="left:1382px;top:550px;font-size:12px;color:#fff">下线</div>
<div class="t" style="left:1477px;top:550px;font-size:12px;color:#666;letter-spacing:0.2px">2019-12-14 20:4...</div>
<div class="abs" style="left:1638px;top:546px;width:27px;height:20px;background:#1E9FFF;border-radius:2px 0 0 2px"><svg class="abs" style="left:6px;top:5px" width="12" height="11" viewBox="0 0 12 11"><path d="M1 10.2 L1.9 7.8 L9.3 0.6 L11 2.3 L3.5 9.6Z" fill="#fff"/></svg></div>
<div class="abs" style="left:1665px;top:546px;width:28px;height:20px;background:#FF5722;border-radius:0 2px 2px 0"><svg class="abs" style="left:7px;top:5px" width="12" height="12" viewBox="0 0 12 12"><path d="M4.4 2.3 V1.2 H7.6 V2.3" fill="none" stroke="#fff" stroke-width="1"/><path d="M0.9 2.8 H11.1" stroke="#fff" stroke-width="1.2"/><path d="M2.1 3.4 L2.7 10.8 H9.3 L9.9 3.4" fill="none" stroke="#fff" stroke-width="1.3"/><path d="M4.7 4.6V9.6M6 4.6V9.6M7.3 4.6V9.6" stroke="#fff" stroke-width="0.5"/></svg></div>
<div class="abs" style="left:1735px;top:104px;width:16px;height:463px;background:#f0f0f0;border-left:1px solid #e8e8e8"></div>
<svg class="abs" style="left:1739px;top:111px" width="9" height="5"><path d="M0 5H9L4.5 0Z" fill="#505050"/></svg>
<div class="abs" style="left:1736px;top:123px;width:14px;height:105px;background:linear-gradient(90deg,#e4e4e4,#d0d0d0);border:1px solid #b9b9b9;border-radius:2px"></div>
<svg class="abs" style="left:1739px;top:170px" width="8" height="7"><path d="M0 .5H8M0 3.5H8M0 6.5H8" stroke="#777" stroke-width="1"/></svg>
<div class="abs" style="left:826px;top:244px;width:458px;height:323px;background:#fff;border-left:1.5px solid #3f434c;border-right:2px solid #4a4e57"></div>
<div class="abs" style="left:826px;top:244px;width:456px;height:26px;background:#4674a5"></div>
<div class="t" style="left:840px;top:252px;font-size:9px;color:#fff">批量修改直播</div>
<svg class="abs" style="left:1263px;top:254px" width="8" height="8"><path d="M0.5 0.5L7.5 7.5M7.5 0.5L0.5 7.5" stroke="#333" stroke-width="0.9"/></svg>
<div class="abs" style="left:827px;top:271px;width:455px;height:33px;background:#f2f2f2"></div>
<div class="abs" style="left:827px;top:271px;width:4px;height:33px;background:#009688"></div>
<div class="t" style="left:840px;top:283.5px;font-size:9px;color:#ff2a2a">频道类型无选择项即为不修改</div>
<div class="t" style="left:843px;top:319px;font-size:9px;color:#333">频道状态：</div>
<svg class="abs" style="left:908px;top:316px" width="14" height="14"><circle cx="7" cy="7" r="6" fill="#fff" stroke="#5FB878" stroke-width="1"/><circle cx="7" cy="7" r="3" fill="#5FB878"/></svg>
<div class="t" style="left:928px;top:320px;font-size:9px;color:#333">上线</div>
<svg class="abs" style="left:962px;top:316px" width="14" height="14"><circle cx="7" cy="7" r="6" fill="#fff" stroke="#c9c9c9" stroke-width="1"/></svg>
<div class="t" style="left:981px;top:320px;font-size:9px;color:#333">下线</div>
<div class="t" style="left:1042px;top:319px;font-size:9px;color:#333">回看服务器:</div>
<div class="abs" style="left:1100px;top:311px;width:123px;height:25px;border:1px solid #e6e6e6;border-radius:2px"></div>
<div class="t" style="left:1107px;top:320px;font-size:9px;color:#333">本地服务器</div>
<svg class="abs" style="left:1209px;top:321px" width="8" height="4"><path d="M0 0H8L4 4Z" fill="#c2c2c2"/></svg>
<div class="t" style="left:843px;top:354px;font-size:9px;color:#333">频道类型：</div>
<div class="abs" style="left:1023px;top:348px;width:68px;height:19px;border:1px solid #e6e6e6;border-radius:2px;background:#fff"></div>
<div class="abs" style="left:1023px;top:348px;width:49px;height:19px;background:#5FB878;border-radius:2px 0 0 2px"></div>
<div class="t" style="left:1023px;width:49px;top:354px;font-size:9px;color:#fff;text-align:center">直播频道</div>
<svg class="abs" style="left:1076px;top:353px" width="11" height="9"><path d="M0.6 4.5 L4 7.6 L10.4 1" fill="none" stroke="#5FB878" stroke-width="1"/></svg>
<div class="abs" style="left:1101px;top:348px;width:52px;height:19px;border:1px solid #e6e6e6;border-radius:2px;background:#fff"></div>
<div class="abs" style="left:1101px;top:348px;width:31px;height:19px;background:#d2d2d2;border-radius:2px 0 0 2px"></div>
<div class="t" style="left:1101px;width:31px;top:354px;font-size:9px;color:#fff;text-align:center">轮播</div>
<div class="t" style="left:842px;top:403px;font-size:9px;color:#333">应用场景</div>
<svg class="abs" style="left:880px;top:404px" width="8" height="5"><path d="M0 0H8L4 5Z" fill="#333"/></svg>
<div class="t" style="left:853px;top:416px;font-size:9px;color:#333">直播套餐</div>
<div class="abs" style="left:900px;top:416px;width:253px;height:59px;background:#efefef"></div>
<div class="abs" style="left:1026px;top:416px;width:2px;height:59px;background:#fff"></div>
<div class="abs" style="left:925px;top:397px;width:68px;height:19px;border:1px solid #e6e6e6;border-radius:2px;background:#fff"></div>
<div class="abs" style="left:925px;top:397px;width:49px;height:19px;background:#5FB878;border-radius:2px 0 0 2px"></div>
<div class="t" style="left:925px;width:49px;top:403px;font-size:9px;color:#fff;text-align:center">智慧酒店</div>
<svg class="abs" style="left:978px;top:402px" width="11" height="9"><path d="M0.6 4.5 L4 7.6 L10.4 1" fill="none" stroke="#5FB878" stroke-width="1"/></svg>
<div class="abs" style="left:1062px;top:397px;width:50px;height:19px;border:1px solid #e6e6e6;border-radius:2px;background:#fff"></div>
<div class="abs" style="left:1062px;top:397px;width:31px;height:19px;background:#5FB878;border-radius:2px 0 0 2px"></div>
<div class="t" style="left:1062px;width:31px;top:403px;font-size:9px;color:#fff;text-align:center">水会</div>
<svg class="abs" style="left:1097px;top:402px" width="11" height="9"><path d="M0.6 4.5 L4 7.6 L10.4 1" fill="none" stroke="#5FB878" stroke-width="1"/></svg>
<div class="abs" style="left:925px;top:419px;width:68px;height:19px;border:1px solid #e6e6e6;border-radius:2px;background:#fff"></div>
<div class="abs" style="left:925px;top:419px;width:49px;height:19px;background:#5FB878;border-radius:2px 0 0 2px"></div>
<div class="t" style="left:925px;width:49px;top:425px;font-size:9px;color:#fff;text-align:center">默认套餐</div>
<svg class="abs" style="left:978px;top:424px" width="11" height="9"><path d="M0.6 4.5 L4 7.6 L10.4 1" fill="none" stroke="#5FB878" stroke-width="1"/></svg>
<div class="abs" style="left:1053px;top:419px;width:68px;height:19px;border:1px solid #e6e6e6;border-radius:2px;background:#fff"></div>
<div class="abs" style="left:1053px;top:419px;width:49px;height:19px;background:#5FB878;border-radius:2px 0 0 2px"></div>
<div class="t" style="left:1053px;width:49px;top:425px;font-size:9px;color:#fff;text-align:center">尊享套餐</div>
<svg class="abs" style="left:1106px;top:424px" width="11" height="9"><path d="M0.6 4.5 L4 7.6 L10.4 1" fill="none" stroke="#5FB878" stroke-width="1"/></svg>
<div class="abs" style="left:925px;top:441px;width:67px;height:19px;border:1px solid #e6e6e6;border-radius:2px;background:#fff"></div>
<div class="abs" style="left:925px;top:441px;width:48px;height:19px;background:#5FB878;border-radius:2px 0 0 2px"></div>
<div class="t" style="left:925px;width:48px;top:447px;font-size:9px;color:#fff;text-align:center">VIP-房间</div>
<svg class="abs" style="left:977px;top:446px" width="11" height="9"><path d="M0.6 4.5 L4 7.6 L10.4 1" fill="none" stroke="#5FB878" stroke-width="1"/></svg>
<div class="abs" style="left:827px;top:534px;width:455px;height:1px;background:#e6e6e6"></div>
<div class="abs" style="left:1188px;top:541px;width:39px;height:19px;border:1px solid #e6e6e6;background:#fff;border-radius:2px"></div>
<div class="t" style="left:1188px;width:39px;text-align:center;top:546px;font-size:9px;color:#333">修改</div>
<div class="abs" style="left:1234px;top:541px;width:38px;height:19px;background:#c9c5c3;border-radius:1px"></div>
<div class="t" style="left:1234px;width:38px;text-align:center;top:546px;font-size:9px;color:#333">返回</div>
<div class="abs" style="left:-3px;top:233px;width:119px;height:47px;border:3px solid #ff1508;border-radius:3px"></div>
<div class="abs" style="left:198px;top:232px;width:47px;height:29px;border:3px solid #ff1508;border-radius:3px"></div>
<div class="abs" style="left:251px;top:181px;width:41px;height:46px;border:3px solid #ff1508;border-radius:3px"></div>
<div class="abs" style="left:520px;top:292px;width:266px;height:274px;border:3px solid #ff1508;border-radius:3px"></div>
<div class="abs" style="left:1356px;top:292px;width:95px;height:274px;border:3px solid #ff1508;border-radius:3px"></div>
<div class="abs" style="left:1006px;top:341px;width:88px;height:34px;border:2px solid #ff1508;border-radius:3px"></div>
<div class="abs" style="left:909px;top:387px;width:230px;height:88px;border:2px solid #ff1508;border-radius:3px"></div>
<svg class="abs" style="left:167px;top:236px" width="23" height="22" viewBox="0 0 23 22"><circle cx="11.5" cy="11" r="9.6" fill="none" stroke="#f01c16" stroke-width="1.25"/><text x="11.5" y="16.4" text-anchor="middle" font-family="Liberation Serif" font-size="16.5" fill="#f01c16">1</text></svg>
<div class="t" style="left:282px;top:155px;font-size:21px;color:#ff1508">②</div>
<div class="t" style="left:309px;top:153px;font-size:21px;color:#ff1508">批量编辑</div>
<div class="t" style="left:638px;top:388.5px;font-size:21px;color:#ff1508;line-height:28px">没有<br>编辑的情况下</div>
<div class="t" style="left:933px;top:485px;font-size:13.4px;color:#ff1508">③ 勾选所属自己的场景与套餐</div>
